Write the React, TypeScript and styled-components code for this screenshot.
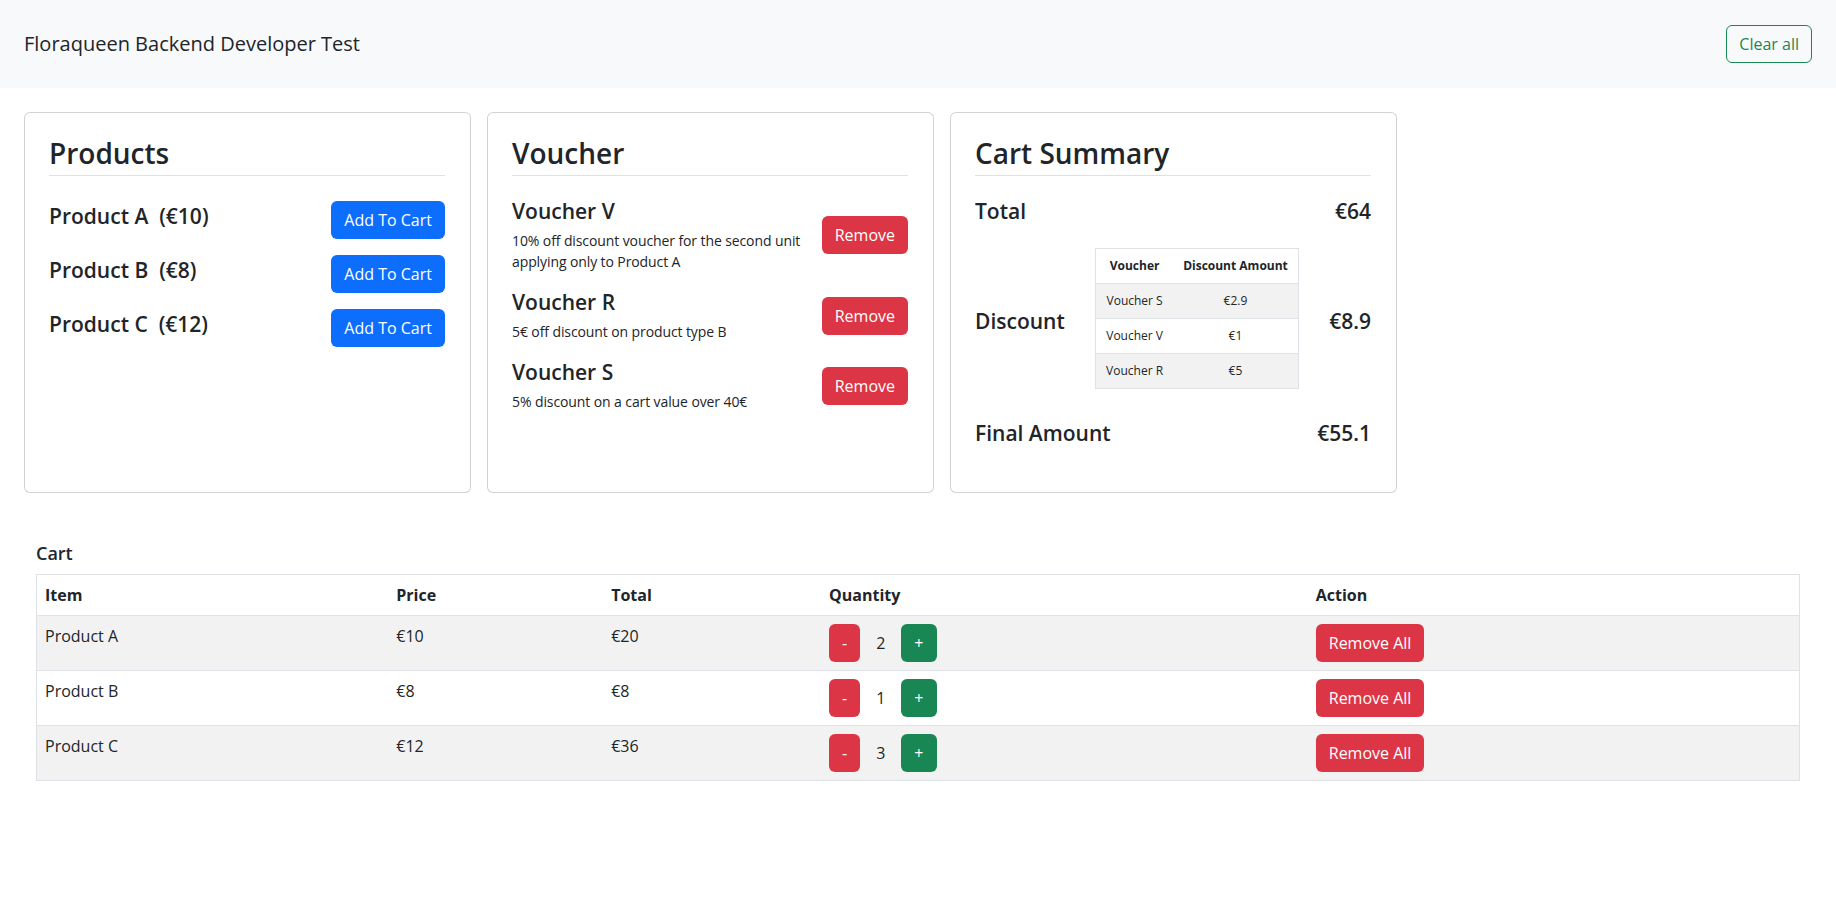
import React from "react";
import styled, {createGlobalStyle} from "styled-components";

const colors = {
	text: "#212529",
	border: "#dee2e6",
	cardBorder: "rgba(0, 0, 0, 0.175)",
	stripe: "#f2f2f2",
	navBg: "#f8f9fa",
	primary: "#0d6efd",
	danger: "#dc3545",
	success: "#198754",
}

type Variant = "primary" | "danger" | "success" | "outlineSuccess";

const products = [
	{name: "Product A", price: 10},
	{name: "Product B", price: 8},
	{name: "Product C", price: 12},
]

const vouchers = [
	{name: "Voucher V", description: "10% off discount voucher for the second unit applying only to Product A"},
	{name: "Voucher R", description: "5€ off discount on product type B"},
	{name: "Voucher S", description: "5% discount on a cart value over 40€"},
]

const discounts = [
	{voucher: "Voucher S", amount: "€2.9"},
	{voucher: "Voucher V", amount: "€1"},
	{voucher: "Voucher R", amount: "€5"},
]

const cartItems = [
	{name: "Product A", price: 10, quantity: 2},
	{name: "Product B", price: 8, quantity: 1},
	{name: "Product C", price: 12, quantity: 3},
]

const cartColumns = [
	{title: "Item", width: 352},
	{title: "Price", width: 215},
	{title: "Total", width: 218},
	{title: "Quantity", width: 487},
	{title: "Action", width: 492},
]

const App = () => {
	return (
		<>
			<GlobalStyle/>
			<Navbar>
				<Brand>Floraqueen Backend Developer Test</Brand>
				<Button $variant="outlineSuccess">Clear all</Button>
			</Navbar>
			<Main>
				<CardsRow>
					<Card>
						<CardTitle>Products</CardTitle>
						<ProductList>
							{products.map(p => (
								<ProductRow key={p.name}>
									<ProductName>{p.name}&nbsp; (€{p.price})</ProductName>
									<Button $variant="primary">Add To Cart</Button>
								</ProductRow>
							))}
						</ProductList>
					</Card>

					<Card>
						<CardTitle>Voucher</CardTitle>
						<VoucherList>
							{vouchers.map(v => (
								<VoucherRow key={v.name}>
									<VoucherInfo>
										<VoucherName>{v.name}</VoucherName>
										<VoucherDescription>{v.description}</VoucherDescription>
									</VoucherInfo>
									<Button $variant="danger">Remove</Button>
								</VoucherRow>
							))}
						</VoucherList>
					</Card>

					<Card>
						<CardTitle>Cart Summary</CardTitle>
						<SummaryRow $gap={24}>
							<ItemName>Total</ItemName>
							<ItemName>€64</ItemName>
						</SummaryRow>
						<SummaryRow $gap={32}>
							<DiscountLabel>Discount</DiscountLabel>
							<DiscountTable>
								<thead>
								<tr>
									<th>Voucher</th>
									<th>Discount Amount</th>
								</tr>
								</thead>
								<tbody>
								{discounts.map(d => (
									<tr key={d.voucher}>
										<td>{d.voucher}</td>
										<td>{d.amount}</td>
									</tr>
								))}
								</tbody>
							</DiscountTable>
							<DiscountLabel>€8.9</DiscountLabel>
						</SummaryRow>
						<SummaryRow $gap={0}>
							<ItemName>Final Amount</ItemName>
							<ItemName>€55.1</ItemName>
						</SummaryRow>
					</Card>
				</CardsRow>

				<CartSection>
					<CartTitle>Cart</CartTitle>
					<CartTable>
						<thead>
						<tr>
							{cartColumns.map(c => (
								<th key={c.title} style={{width: c.width}}>{c.title}</th>
							))}
						</tr>
						</thead>
						<tbody>
						{cartItems.map(item => (
							<tr key={item.name}>
								<td>{item.name}</td>
								<td>€{item.price}</td>
								<td>€{item.price * item.quantity}</td>
								<td>
									<Button $variant="danger">-</Button>
									<Quantity>{item.quantity}</Quantity>
									<Button $variant="success">+</Button>
								</td>
								<td>
									<Button $variant="danger">Remove All</Button>
								</td>
							</tr>
						))}
						</tbody>
					</CartTable>
				</CartSection>
			</Main>
		</>
	)
}

export default App;

const GlobalStyle = createGlobalStyle`
  * {
    box-sizing: border-box;
  }

  body {
    margin: 0;
    font-family: "Open Sans", "Noto Sans", sans-serif;
    font-size: 16px;
    line-height: 1.5;
    color: ${colors.text};
    background: #fff;
  }
`

const Navbar = styled.header`
  height: 88px;
  padding: 0 24px;
  display: flex;
  align-items: center;
  justify-content: space-between;
  background-color: ${colors.navBg};
`

const Brand = styled.span`
  font-size: 20px;
  line-height: 1.5;
`

const Button = styled.button<{ $variant: Variant }>`
  display: inline-block;
  padding: 6px 12px;
  font-family: inherit;
  font-size: 16px;
  line-height: 1.5;
  border-radius: 6px;
  border: 1px solid transparent;
  cursor: pointer;
  white-space: nowrap;
  vertical-align: middle;
  color: #fff;
  background-color: ${({$variant}) =>
          $variant === "primary" ? colors.primary
                  : $variant === "danger" ? colors.danger
                          : $variant === "success" ? colors.success
                                  : "transparent"};
  ${({$variant}) => $variant === "outlineSuccess" && `
    color: ${colors.success};
    border-color: ${colors.success};
  `}
`

const Main = styled.main`
  padding: 24px;
`

const CardsRow = styled.div`
  display: flex;
  gap: 16px;
  align-items: stretch;
`

const Card = styled.section`
  width: 447px;
  min-height: 381px;
  padding: 24px 25px 22px 24px;
  border: 1px solid ${colors.cardBorder};
  border-radius: 6px;
  background: #fff;
`

const CardTitle = styled.h2`
  margin: 0 0 23px;
  padding-bottom: 4px;
  font-size: 28px;
  font-weight: 600;
  line-height: 1.2;
  border-bottom: 1px solid ${colors.border};
`

const ProductList = styled.div`
  display: flex;
  flex-direction: column;
  gap: 16px;
  padding-top: 2px;
`

const ProductRow = styled.div`
  display: flex;
  align-items: center;
  justify-content: space-between;
`

const ItemName = styled.h5`
  margin: 0;
  font-size: 21px;
  font-weight: 600;
  line-height: 1.2;
  white-space: nowrap;
`

const ProductName = styled(ItemName)`
  margin-bottom: 7px;
`

const DiscountLabel = styled(ItemName)`
  margin-top: 7px;
`

const VoucherList = styled.div`
  display: flex;
  flex-direction: column;
  gap: 18px;
`

const VoucherRow = styled.div`
  display: flex;
  align-items: center;
  justify-content: space-between;
  gap: 8px;
`

const VoucherInfo = styled.div`
  flex: 1;
`

const VoucherName = styled(ItemName)`
  margin-bottom: 6px;
`

const VoucherDescription = styled.p`
  margin: 0;
  font-size: 14px;
  line-height: 21px;
  letter-spacing: -0.1px;
`

const SummaryRow = styled.div<{ $gap: number }>`
  display: flex;
  align-items: center;
  justify-content: space-between;
  margin-bottom: ${({$gap}) => $gap}px;
`

const DiscountTable = styled.table`
  border-collapse: collapse;
  border: 1px solid ${colors.border};
  font-size: 12px;
  line-height: 18px;
  text-align: center;

  th, td {
    padding: 8px 10px;
    border-bottom: 1px solid ${colors.border};
  }

  th {
    font-weight: 700;
  }

  tbody tr:nth-child(odd) {
    background-color: ${colors.stripe};
  }
`

const CartSection = styled.section`
  margin-top: 50px;
  padding: 0 12px;
`

const CartTitle = styled.h4`
  margin: 0 0 9px;
  font-size: 18px;
  font-weight: 600;
  line-height: 1.2;
`

const CartTable = styled.table`
  width: 100%;
  border-collapse: collapse;
  border: 1px solid ${colors.border};
  text-align: left;
  vertical-align: top;

  th, td {
    padding: 8px;
    vertical-align: top;
    border-bottom: 1px solid ${colors.border};
  }

  th {
    font-weight: 700;
  }

  tbody tr:nth-child(odd) {
    background-color: ${colors.stripe};
  }
`

const Quantity = styled.span`
  margin: 0 16px;
  vertical-align: middle;
`
